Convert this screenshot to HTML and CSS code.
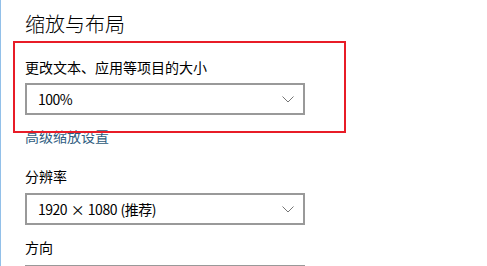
FILE: index.html
```html
<!DOCTYPE html>
<html lang="zh-CN">
<head>
<meta charset="utf-8">
<title>缩放与布局</title>
<link rel="stylesheet" href="styles.css">
</head>
<body>
<main class="page">
  <h1 class="title">缩放与布局</h1>
  <section class="group">
    <div class="label first">更改文本、应用等项目的大小</div>
    <div class="select select-scale">
      <span class="value">100%</span>
      <svg class="chev" width="12" height="7" viewBox="0 0 12 7"><path d="M0.5 0.5 L6 6 L11.5 0.5" fill="none" stroke="#767676" stroke-width="1"/></svg>
    </div>
    <a class="link" href="#">高级缩放设置</a>
    <div class="label res">分辨率</div>
    <div class="select select-res">
      <span class="value">1920 × 1080 (推荐)</span>
      <svg class="chev" width="12" height="7" viewBox="0 0 12 7"><path d="M0.5 0.5 L6 6 L11.5 0.5" fill="none" stroke="#767676" stroke-width="1"/></svg>
    </div>
    <div class="label orient">方向</div>
    <div class="select select-orient"></div>
  </section>
  <div class="highlight"></div>
</main>
</body>
</html>
```

FILE: styles.css
```css
* { box-sizing: border-box; }
html, body {
  margin: 0;
  padding: 0;
  background: #fff;
  height: 100%;
  overflow: hidden;
}
body {
  font-family: "Noto Sans CJK SC", "Noto Sans", sans-serif;
  color: #000;
}
.page {
  position: relative;
  height: 266px;
  overflow: hidden;
  border-left: 1px solid #92c0e9;
  padding-left: 24px;
  display: flex;
  flex-direction: column;
}
.title {
  margin: 10px 0 0;
  font-size: 20px;
  line-height: 28px;
  font-weight: 300;
}
.group {
  display: flex;
  flex-direction: column;
  align-items: flex-start;
}
.label {
  font-size: 14px;
  line-height: 20px;
}
.label.first { margin-top: 19px; }
.label.res { margin-top: 20px; }
.label.orient { margin-top: 12px; }
.select {
  width: 280px;
  height: 32px;
  border: 2px solid #999;
  display: flex;
  align-items: center;
  justify-content: space-between;
  padding: 0 9px 0 11px;
  font-size: 14px;
  flex-shrink: 0;
}
.select-scale { margin-top: 6px; }
.select-res { margin-top: 7px; }
.select-orient { margin-top: 8px; height: 20px; border-bottom: 0; }
.value {
  line-height: 20px;
  letter-spacing: -0.5px;
  word-spacing: 1px;
}
.chev { display: block; }
.link {
  margin-top: 11px;
  font-size: 14px;
  line-height: 20px;
  color: #2e5c80;
  text-decoration: none;
}
.highlight {
  position: absolute;
  left: 12px;
  top: 41px;
  width: 333px;
  height: 92px;
  border: 2px solid #e81c27;
  pointer-events: none;
}
```
